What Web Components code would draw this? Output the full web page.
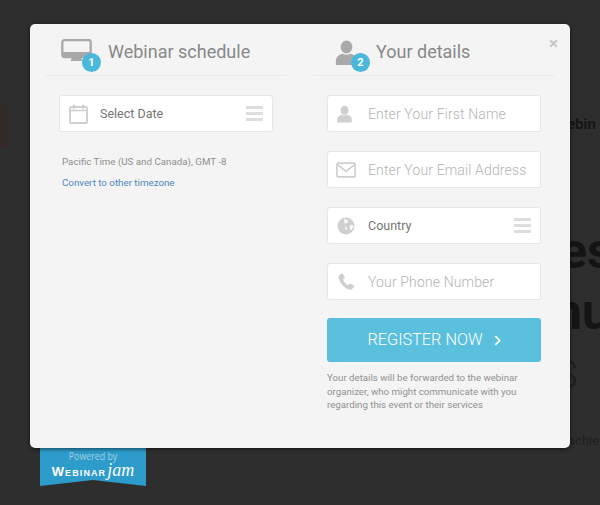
<!DOCTYPE html>
<html lang="en">
<head>
<meta charset="utf-8">
<title>Webinar registration</title>
<style>
html, body { margin: 0; padding: 0; height: 100%; }
body { width: 600px; height: 505px; overflow: hidden; background: #2e2e2e; font-family: Roboto, "Liberation Sans", sans-serif; }
</style>
</head>
<body>
<wj-page>
  <wj-backdrop slot="backdrop"></wj-backdrop>
  <wj-modal slot="modal">
    <wj-column slot="left" step="1" icon="monitor" heading="Webinar schedule">
      <wj-field icon="calendar" label="Select Date" select></wj-field>
      <wj-timezone></wj-timezone>
    </wj-column>
    <wj-column slot="right" step="2" icon="user" heading="Your details">
      <wj-field icon="user" label="Enter Your First Name"></wj-field>
      <wj-field icon="mail" label="Enter Your Email Address"></wj-field>
      <wj-field icon="globe" label="Country" select></wj-field>
      <wj-field icon="phone" label="Your Phone Number"></wj-field>
      <wj-register></wj-register>
    </wj-column>
  </wj-modal>
</wj-page>

<script>
// Icon shapes shared by the headers and the fields.
const icons = {
  monitor: `<svg viewBox="0 0 32 24" width="31" height="23"><rect x="1.2" y="1.2" width="29.6" height="17.6" rx="2" fill="none" stroke="currentColor" stroke-width="2.4"/><rect x="1" y="13.5" width="30" height="6" rx="1.5" fill="currentColor"/><path d="M11 19.5h10l1 3.5h-12z" fill="currentColor"/></svg>`,
  user: `<svg viewBox="0 0 20 20" width="20" height="20"><ellipse cx="10" cy="5.6" rx="4.7" ry="5.2" fill="currentColor"/><path d="M1.5 20v-3.500c0-3.300 3-5 5.500-5.500 1.800 1 4.200 1 6 0 2.500.5 5.500 2.200 5.500 5.500V20z" fill="currentColor"/></svg>`,
  mail: `<svg viewBox="0 0 22 17" width="20" height="16"><rect x="1" y="1" width="20" height="15" rx="1.5" fill="none" stroke="currentColor" stroke-width="1.8"/><path d="M1.500 2.500 11 10l9.500-7.500" fill="none" stroke="currentColor" stroke-width="1.8"/></svg>`,
  globe: `<svg viewBox="0 0 18 18" width="18" height="18"><circle cx="9" cy="9" r="8.5" fill="currentColor"/><path d="M7 1.500c1.500 1.500 3.500 1 4 2.500s-1 2-2.500 2.500S7 9 9 10s1 3-.5 3.500M13 8c1.500-.5 3 0 3.500 1-.5 2-1.500 3.500-3 4.500-.5-2-1.500-3-.5-5.500" fill="#fff" fill-opacity=".85"/></svg>`,
  phone: `<svg viewBox="0 0 17 17" width="17" height="17"><path d="M3.800.6 1.300 2C.5 2.600.4 3.800.7 5c1.100 4.600 5 9.800 9.900 11.500 1.300.4 2.500.4 3.200-.3l2.200-2.200c.4-.4.300-1-.1-1.300l-3.300-2.100c-.4-.2-.9-.2-1.200.2l-1.300 1.400C8 11.200 5.700 8.200 5 6.400l1.400-1c.4-.3.500-.8.300-1.200L5 1c-.3-.5-.8-.6-1.200-.4z" fill="currentColor"/></svg>`,
  calendar: `<svg viewBox="0 0 19 20" width="19" height="20"><rect x="1" y="3" width="17" height="16" rx="1" fill="none" stroke="currentColor" stroke-width="1.8"/><path d="M1 6.500h17" stroke="currentColor" stroke-width="1.6"/><rect x="3.800" y="0.500" width="2.200" height="4.500" rx="1" fill="currentColor"/><rect x="13" y="0.500" width="2.200" height="4.500" rx="1" fill="currentColor"/></svg>`
}

/**
 * Adds an open shadow root with the given markup to an element.
 *
 * @param {HTMLElement} el The host element.
 * @param {string} html The markup.
 */
function shadow(el, html) {
  el.attachShadow({ mode: 'open' }).innerHTML = html
}

customElements.define('wj-page', class extends HTMLElement {
  constructor() {
    super()
    shadow(this, `<style>
      :host { display: block; position: relative; width: 600px; height: 505px; overflow: hidden; }
      ::slotted(wj-modal) { position: absolute; left: 30px; top: 24px; }
    </style><slot name="backdrop"></slot><slot name="modal"></slot>`)
  }
})

// The page behind the dialog, dimmed. Only its edges are visible.
customElements.define('wj-backdrop', class extends HTMLElement {
  constructor() {
    super()
    shadow(this, `<style>
      :host { display: block; height: 505px; color: #141414; font-family: Roboto, "Liberation Sans", sans-serif; white-space: nowrap; overflow: hidden; }
      .page { display: flex; justify-content: space-between; height: 100%; }
      .side { width: 46px; padding-top: 103px; box-sizing: border-box; }
      .leaf { width: 9px; height: 45px; background: #332a27; border-radius: 0 70% 70% 0; }
      .main { width: 46px; display: flex; flex-direction: column; align-items: flex-start; }
      .a { font-size: 15px; font-weight: 700; margin: 115px 0 0 13px; line-height: 18px; }
      .b { font-size: 50px; font-weight: 700; margin: 88px 0 0 6px; line-height: 60px; }
      .c { font-size: 50px; font-weight: 700; line-height: 60px; margin-top: 1px; }
      .d { font-size: 38px; font-weight: 300; color: #1e1e1e; line-height: 60px; margin: 3px 0 0 1px; }
      .e { font-size: 13px; color: #1f1f1f; line-height: 16px; margin: 28px 0 0 14px; }
      .banner { position: absolute; left: 40px; top: 448px; width: 106px; height: 38px; padding-top: 1px; box-sizing: border-box; background: #2d9ccb; clip-path: polygon(0 0, 100% 0, 100% 100%, 50% 84%, 0 100%); text-align: center; color: #fff; }
      .powered { font: 11px/13px "Open Sans", "Liberation Sans", sans-serif; color: #a0cfe3; transform: scaleX(.8); }
      .brand { display: flex; justify-content: center; align-items: baseline; gap: 1px; margin-top: 1px; }
      .web { font: 700 13px/14px "Liberation Sans", sans-serif; letter-spacing: 1.1px; font-variant: small-caps; }
      .jam { font: italic 400 18px/14px "Liberation Serif", serif; }
    </style>
    <div class="page">
      <div class="side"><div class="leaf"></div></div>
      <div class="main">
        <div class="a">ebin</div>
        <div class="b">es</div>
        <div class="c">nu</div>
        <div class="d">S</div>
        <div class="e">achie</div>
      </div>
    </div>
    <div class="banner">
      <div class="powered">Powered by</div>
      <div class="brand"><span class="web">Webinar</span><span class="jam">jam</span></div>
    </div>`)
  }
})

customElements.define('wj-modal', class extends HTMLElement {
  constructor() {
    super()
    shadow(this, `<style>
      :host { display: block; width: 540px; height: 424px; box-sizing: border-box; background: #f4f4f4; border-radius: 5px; box-shadow: 0 1px 4px rgba(0,0,0,.6); }
      .cols { display: grid; grid-template-columns: 242px 242px; column-gap: 26px; padding: 0 15px; }
      .close { position: absolute; left: 519px; top: 11px; font: 700 17px/16px Roboto, "Liberation Sans", sans-serif; color: #c6c6c6; }
    </style>
    <div class="cols"><slot name="left"></slot><slot name="right"></slot></div>
    <div class="close">×</div>`)
  }
})

customElements.define('wj-column', class extends HTMLElement {
  constructor() {
    super()
    const step = this.getAttribute('step')
    const user = this.getAttribute('icon') === 'user'
    shadow(this, `<style>
      :host { display: block; }
      header { display: flex; align-items: flex-start; height: 52px; box-sizing: border-box; padding: 15px 0 0 ${user ? 21 : 16}px; border-bottom: 1px solid #ebebeb; }
      .icon { position: relative; width: ${user ? 42 : 46}px; height: 35px; color: #a9a9a9; flex: none; padding-top: ${user ? 1 : 0}px; box-sizing: border-box; }
      .icon svg { display: block; ${user ? 'width: 25px; height: 25px;' : ''} }
      h2 { margin: 2px 0 0; font: 400 18px/22px Roboto, "Liberation Sans", sans-serif; color: #888; padding-left: ${user ? 0 : 1}px; }
      .badge { position: absolute; left: ${user ? 17 : 21}px; top: 14px; width: 19px; height: 19px; border-radius: 50%; background: #4ab8dc; color: #fff; font: 700 11px/19px Roboto, "Liberation Sans", sans-serif; text-align: center; }
      .body { display: flex; flex-direction: column; gap: 19px; padding: 19px 15px 0 14px; }
    </style>
    <header>
      <div class="icon">${icons[this.getAttribute('icon')]}<span class="badge">${step}</span></div>
      <h2>${this.getAttribute('heading')}</h2>
    </header>
    <div class="body"><slot></slot></div>`)
  }
})

customElements.define('wj-field', class extends HTMLElement {
  constructor() {
    super()
    const select = this.hasAttribute('select')
    const name = this.getAttribute('icon')
    const shift = { user: -4, calendar: -2 }[name] ?? -2
    const glyph = name === 'user' ? icons.user.replace('width="20" height="20"', 'width="17" height="18"') : icons[name]
    shadow(this, `<style>
      :host { display: flex; align-items: center; width: 214px; height: 37px; box-sizing: border-box; background: #fff; border: 1px solid #e6e6e6; border-radius: 3px; position: relative; }
      .icon { width: 40px; display: flex; justify-content: center; color: #cfcfcf; flex: none; transform: translateX(${shift}px); }
      .text { font: ${select ? '400 12.5px' : '300 14px'}/18px Roboto, "Liberation Sans", sans-serif; letter-spacing: ${select ? 0 : '.14px'}; color: ${select ? '#757575' : '#b4b4b4'}; white-space: nowrap; flex: 1; }
      .menu { display: flex; flex-direction: column; gap: 3px; margin-right: 9px; }
      .menu i { display: block; width: 17px; height: 3px; background: #dedede; }
    </style>
    <span class="icon">${glyph}</span>
    <span class="text">${this.getAttribute('label')}</span>
    ${select ? '<span class="menu"><i></i><i></i><i></i></span>' : ''}`)
  }
})

customElements.define('wj-timezone', class extends HTMLElement {
  constructor() {
    super()
    shadow(this, `<style>
      :host { display: block; font: 400 9.75px/13px Roboto, "Liberation Sans", sans-serif; padding: 4px 0 0 3px; color: #8f8f8f; }
      a { display: block; margin-top: 8px; color: #4f86c0; text-decoration: none; }
    </style>
    <div>Pacific Time (US and Canada), GMT -8</div>
    <a href="#">Convert to other timezone</a>`)
  }
})

customElements.define('wj-register', class extends HTMLElement {
  constructor() {
    super()
    shadow(this, `<style>
      :host { display: block; width: 214px; margin-top: -1px; }
      button { display: flex; align-items: center; justify-content: center; gap: 11px; width: 100%; height: 44px; padding: 0; border: 0; border-radius: 3px; background: #5bc0de; color: #fff; font: 300 16.3px/20px Roboto, "Liberation Sans", sans-serif; }
      svg { display: block; }
      p { margin: 9px 0 0; font: 400 9.7px/13.5px Roboto, "Liberation Sans", sans-serif; color: #919191; }
    </style>
    <button type="button">REGISTER NOW <svg viewBox="0 0 8 12" width="7" height="11"><path d="M1.500 1 6.500 6l-5 5" fill="none" stroke="#fff" stroke-width="2"/></svg></button>
    <p>Your details will be forwarded to the webinar organizer, who might communicate with you regarding this event or their services</p>`)
  }
})
</script>
</body>
</html>
